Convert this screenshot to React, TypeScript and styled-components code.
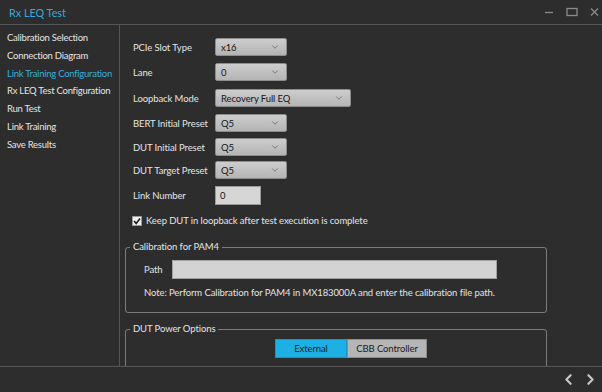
import React from 'react';
import styled, { createGlobalStyle } from 'styled-components';
import { ChevronDown, ChevronLeft, ChevronRight } from 'lucide-react';

const GlobalStyle = createGlobalStyle`
  html, body {
    margin: 0;
    padding: 0;
    background: #2d2d2d;
  }
  * {
    box-sizing: border-box;
  }
`;

const navItems = [
  'Calibration Selection',
  'Connection Diagram',
  'Link Training Configuration',
  'Rx LEQ Test Configuration',
  'Run Test',
  'Link Training',
  'Save Results',
];

const selectRows = [
  { label: 'PCIe Slot Type', value: 'x16', wide: false, gap: 0 },
  { label: 'Lane', value: '0', wide: false, gap: 7 },
  { label: 'Loopback Mode', value: 'Recovery Full EQ', wide: true, gap: 8 },
  { label: 'BERT Initial Preset', value: 'Q5', wide: false, gap: 7 },
  { label: 'DUT Initial Preset', value: 'Q5', wide: false, gap: 6 },
  { label: 'DUT Target Preset', value: 'Q5', wide: false, gap: 5 },
];

const App: React.FC = () => {
  return (
    <>
      <GlobalStyle />
      <Window>
        <TitleBar>
          <Title>Rx LEQ Test</Title>
          <Controls>
            <svg width="10" height="10" viewBox="0 0 10 10">
              <line x1="1" y1="5.5" x2="9" y2="5.5" stroke="#8a8a8a" strokeWidth="1.3" />
            </svg>
            <svg width="12" height="10" viewBox="0 0 12 10">
              <rect x="1" y="1.5" width="10" height="7" fill="none" stroke="#8a8a8a" strokeWidth="1.3" />
            </svg>
            <svg width="9" height="10" viewBox="0 0 9 10">
              <path d="M1 1.5 L8 8.5 M8 1.5 L1 8.5" stroke="#8a8a8a" strokeWidth="1.3" />
            </svg>
          </Controls>
        </TitleBar>

        <Main>
          <Sidebar>
            {navItems.map((item, i) => (
              <NavItem key={item} $active={i === 2}>
                {item}
              </NavItem>
            ))}
          </Sidebar>

          <Content>
            {selectRows.map((row) => (
              <FormRow key={row.label} $gap={row.gap}>
                <Label>{row.label}</Label>
                <Select $wide={row.wide}>
                  <span>{row.value}</span>
                  <ChevronDown size={10} strokeWidth={1.6} color="#555" />
                </Select>
              </FormRow>
            ))}
            <FormRow $gap={7}>
              <Label>Link Number</Label>
              <NumberInput>0</NumberInput>
            </FormRow>

            <CheckRow>
              <CheckBox>
                <svg width="8" height="8" viewBox="0 0 8 8">
                  <path d="M1 4 L3.2 6.4 L7 1.4" fill="none" stroke="#1d1d1d" strokeWidth="1.6" />
                </svg>
              </CheckBox>
              Keep DUT in loopback after test execution is complete
            </CheckRow>

            <Group $mt={14}>
              <Legend>Calibration for PAM4</Legend>
              <PathRow>
                <PathLabel>Path</PathLabel>
                <PathInput />
              </PathRow>
              <Note>
                Note: Perform Calibration for PAM4 in MX183000A and enter the calibration file path.
              </Note>
            </Group>

            <Group $mt={9}>
              <Legend>DUT Power Options</Legend>
              <Segmented>
                <SegButton $active>External</SegButton>
                <SegButton>CBB Controller</SegButton>
              </Segmented>
              <Spacer />
            </Group>
          </Content>
        </Main>

        <Footer>
          <ChevronLeft size={17} strokeWidth={3} color="#c8c8c8" />
          <ChevronRight size={17} strokeWidth={3} color="#c8c8c8" />
        </Footer>
      </Window>
    </>
  );
};

export default App;

const Window = styled.div`
  width: 602px;
  height: 392px;
  display: flex;
  flex-direction: column;
  background: #2d2d2d;
  color: #e4e4e4;
  font-family: 'Lato', 'Liberation Sans', sans-serif;
  font-size: 9.5px;
  letter-spacing: -0.1px;
  overflow: hidden;
`;

const TitleBar = styled.div`
  height: 25px;
  flex-shrink: 0;
  display: flex;
  align-items: center;
  justify-content: space-between;
  padding: 0 3px 0 9px;
  border-bottom: 1px solid #555;
`;

const Title = styled.div`
  color: #35a9d9;
  font-size: 10.8px;
  letter-spacing: 0;
`;

const Controls = styled.div`
  display: flex;
  align-items: center;
  gap: 12px;
`;

const Main = styled.div`
  flex: 1;
  display: flex;
  min-height: 0;
`;

const Sidebar = styled.nav`
  width: 120px;
  flex-shrink: 0;
  border-right: 1px solid #555;
  padding: 4px 0 0 7px;
`;

const NavItem = styled.div<{ $active?: boolean }>`
  height: 17.8px;
  line-height: 17.8px;
  white-space: nowrap;
  letter-spacing: -0.25px;
  color: ${(p) => (p.$active ? '#37aedd' : '#e4e4e4')};
`;

const Content = styled.div`
  flex: 1;
  overflow: hidden;
  padding: 13px 0 0 5px;
`;

const FormRow = styled.div<{ $gap: number }>`
  display: flex;
  align-items: center;
  margin: ${(p) => p.$gap}px 0 0 8px;
`;

const Label = styled.div`
  width: 82px;
  flex-shrink: 0;
  white-space: nowrap;
`;

const Select = styled.div<{ $wide?: boolean }>`
  width: ${(p) => (p.$wide ? 136 : 72)}px;
  height: 18px;
  display: flex;
  align-items: center;
  justify-content: space-between;
  padding: 0 6px 0 5px;
  background: linear-gradient(#cdcdcd, #b4b4b4);
  border: 1px solid #8c8c8c;
  border-radius: 2px;
  color: #151515;
`;

const NumberInput = styled.div`
  width: 46px;
  height: 19px;
  padding: 0 4px;
  line-height: 17px;
  background: #d6d6d6;
  border: 1px solid #9a9a9a;
  color: #151515;
`;

const CheckRow = styled.label`
  display: flex;
  align-items: center;
  gap: 4px;
  margin: 10px 0 0 7px;
  white-space: nowrap;
`;

const CheckBox = styled.span`
  width: 10px;
  height: 10px;
  display: flex;
  align-items: center;
  justify-content: center;
  background: #f0f0f0;
  border: 1px solid #999;
`;

const Group = styled.fieldset<{ $mt: number }>`
  width: 422px;
  margin: ${(p) => p.$mt}px 0 0 0;
  padding: 0;
  border: 1px solid #7c7c7c;
  border-radius: 3px;
  min-width: 0;
`;

const Legend = styled.legend`
  margin-left: 4px;
  padding: 0 3px;
  line-height: 14px;
`;

const PathRow = styled.div`
  display: flex;
  align-items: center;
  margin: 6px 0 0 18px;
`;

const PathLabel = styled.div`
  width: 28px;
`;

const PathInput = styled.div`
  width: 325px;
  height: 19px;
  background: #d3d3d3;
  border: 1px solid #a0a0a0;
`;

const Note = styled.div`
  margin: 7px 0 0 18px;
  line-height: 13px;
  padding-bottom: 13px;
  white-space: nowrap;
`;

const Segmented = styled.div`
  display: flex;
  margin: 3px 0 0 149px;
`;

const SegButton = styled.div<{ $active?: boolean }>`
  height: 19px;
  line-height: 17px;
  width: ${(p) => (p.$active ? 72 : 80)}px;
  text-align: center;
  color: #1b1b1b;
  background: ${(p) => (p.$active ? '#1cb0e4' : '#b5b5b5')};
  border: 1px solid ${(p) => (p.$active ? '#1795c4' : '#8c8c8c')};
`;

const Spacer = styled.div`
  height: 30px;
`;

const Footer = styled.div`
  height: 26px;
  flex-shrink: 0;
  display: flex;
  align-items: center;
  justify-content: flex-end;
  gap: 5px;
  padding-right: 3px;
  border-top: 1px solid #555;
`;
